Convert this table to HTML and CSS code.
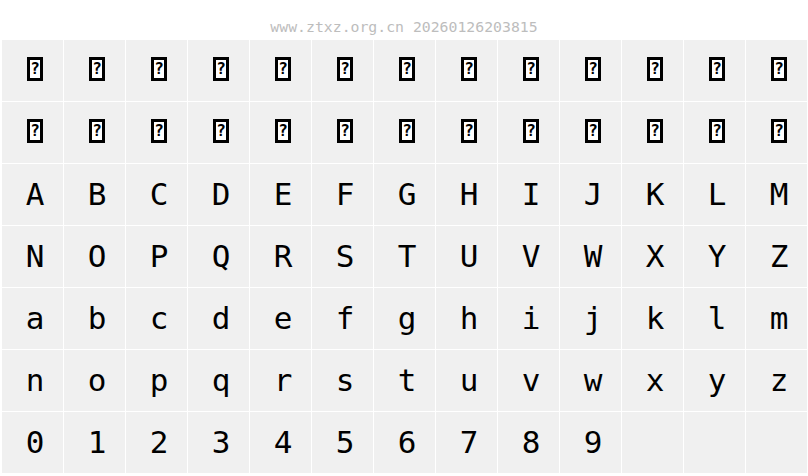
FILE: index.html
```html
<!DOCTYPE html>
<html>
<head>
<meta charset="utf-8">
<link rel="stylesheet" href="styles.css">
</head>
<body>
<div class="header">www.ztxz.org.cn 20260126203815</div>
<div class="grid">
<div class="cell"><span class="tofu">?</span></div>
<div class="cell"><span class="tofu">?</span></div>
<div class="cell"><span class="tofu">?</span></div>
<div class="cell"><span class="tofu">?</span></div>
<div class="cell"><span class="tofu">?</span></div>
<div class="cell"><span class="tofu">?</span></div>
<div class="cell"><span class="tofu">?</span></div>
<div class="cell"><span class="tofu">?</span></div>
<div class="cell"><span class="tofu">?</span></div>
<div class="cell"><span class="tofu">?</span></div>
<div class="cell"><span class="tofu">?</span></div>
<div class="cell"><span class="tofu">?</span></div>
<div class="cell"><span class="tofu">?</span></div>
<div class="cell"><span class="tofu">?</span></div>
<div class="cell"><span class="tofu">?</span></div>
<div class="cell"><span class="tofu">?</span></div>
<div class="cell"><span class="tofu">?</span></div>
<div class="cell"><span class="tofu">?</span></div>
<div class="cell"><span class="tofu">?</span></div>
<div class="cell"><span class="tofu">?</span></div>
<div class="cell"><span class="tofu">?</span></div>
<div class="cell"><span class="tofu">?</span></div>
<div class="cell"><span class="tofu">?</span></div>
<div class="cell"><span class="tofu">?</span></div>
<div class="cell"><span class="tofu">?</span></div>
<div class="cell"><span class="tofu">?</span></div>
<div class="cell">A</div>
<div class="cell">B</div>
<div class="cell">C</div>
<div class="cell">D</div>
<div class="cell">E</div>
<div class="cell">F</div>
<div class="cell">G</div>
<div class="cell">H</div>
<div class="cell">I</div>
<div class="cell">J</div>
<div class="cell">K</div>
<div class="cell">L</div>
<div class="cell">M</div>
<div class="cell">N</div>
<div class="cell">O</div>
<div class="cell">P</div>
<div class="cell">Q</div>
<div class="cell">R</div>
<div class="cell">S</div>
<div class="cell">T</div>
<div class="cell">U</div>
<div class="cell">V</div>
<div class="cell">W</div>
<div class="cell">X</div>
<div class="cell">Y</div>
<div class="cell">Z</div>
<div class="cell">a</div>
<div class="cell">b</div>
<div class="cell">c</div>
<div class="cell">d</div>
<div class="cell">e</div>
<div class="cell">f</div>
<div class="cell">g</div>
<div class="cell">h</div>
<div class="cell">i</div>
<div class="cell">j</div>
<div class="cell">k</div>
<div class="cell">l</div>
<div class="cell">m</div>
<div class="cell">n</div>
<div class="cell">o</div>
<div class="cell">p</div>
<div class="cell">q</div>
<div class="cell">r</div>
<div class="cell">s</div>
<div class="cell">t</div>
<div class="cell">u</div>
<div class="cell">v</div>
<div class="cell">w</div>
<div class="cell">x</div>
<div class="cell">y</div>
<div class="cell">z</div>
<div class="cell">0</div>
<div class="cell">1</div>
<div class="cell">2</div>
<div class="cell">3</div>
<div class="cell">4</div>
<div class="cell">5</div>
<div class="cell">6</div>
<div class="cell">7</div>
<div class="cell">8</div>
<div class="cell">9</div>
<div class="cell"></div>
<div class="cell"></div>
<div class="cell"></div>
</div>
</body>
</html>
```
FILE: styles.css
```css
html, body {
  margin: 0;
  padding: 0;
  background: #ffffff;
}

.header {
  height: 40px;
  box-sizing: border-box;
  padding-top: 17px;
  line-height: 20px;
  font-family: "DejaVu Sans Mono", monospace;
  font-size: 14.8px;
  color: #bdbdbd;
  text-align: center;
}

.grid {
  display: grid;
  grid-template-columns: repeat(13, 61px);
  grid-auto-rows: 61px;
  gap: 1px;
  margin-left: 2px;
}

.cell {
  background: #f0f0f0;
  box-sizing: border-box;
  padding-left: 5px;
  text-align: center;
  line-height: 61px;
  font-family: "DejaVu Sans Mono", monospace;
  font-size: 31px;
  color: #000;
}

.tofu {
  display: inline-block;
  overflow: hidden;
  vertical-align: 0;
  width: 16px;
  height: 24px;
  box-sizing: border-box;
  border: 3px solid #000;
  background: #fff;
  font-family: "DejaVu Sans Mono", monospace;
  font-weight: bold;
  font-size: 16px;
  line-height: 18px;
  text-align: center;
}
```
